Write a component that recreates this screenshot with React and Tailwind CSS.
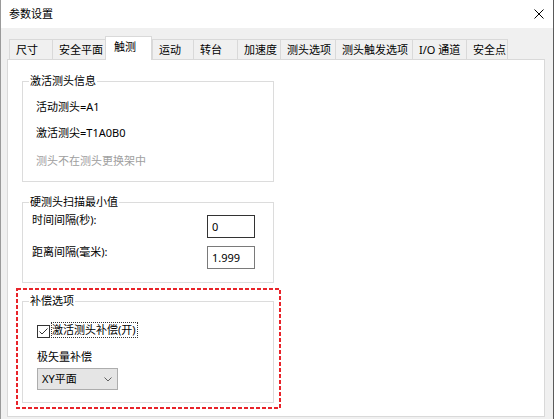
import React from 'react'

// Windows-style "参数设置" property sheet, 触测 tab selected.

const TABS = [
  { label: '尺寸', w: 'w-[43px]' },
  { label: '安全平面', w: 'w-[53px]' },
  { label: '触测', w: 'w-[47px]', active: true },
  { label: '运动', w: 'w-[41px]' },
  { label: '转台', w: 'w-[44px]' },
  { label: '加速度', w: 'w-[43px]' },
  { label: '测头选项', w: 'w-[55px]' },
  { label: '测头触发选项', w: 'w-[77px]' },
  { label: 'I/O 通道', w: 'w-[54px]' },
  { label: '安全点', w: 'w-[42px]', last: true },
]

function Tab({ tab }) {
  if (tab.active) {
    return (
      <div
        className={`${tab.w} h-[24px] -mb-px relative z-10 bg-white border border-b-0 border-[#d9d9d9] pl-[8px] pt-[2px] leading-[16px] text-black`}
      >
        {tab.label}
      </div>
    )
  }
  return (
    <div
      className={`${tab.w} h-[20px] bg-[#f0f0f0] border-t border-l ${
        tab.last ? 'border-r' : ''
      } border-[#d9d9d9] pl-[6px] pt-[2px] leading-[16px] text-black whitespace-nowrap`}
    >
      {tab.label}
    </div>
  )
}

function GroupBox({ title, className, children }) {
  return (
    <fieldset className={`border border-[#dcdcdc] ${className}`}>
      <legend className="ml-[6px] px-px leading-[14px] text-black">{title}</legend>
      {children}
    </fieldset>
  )
}

function CloseIcon() {
  return (
    <svg width="10" height="10" viewBox="0 0 10 10" className="block">
      <path d="M0.5 0.5 L9.5 9.5 M9.5 0.5 L0.5 9.5" stroke="#000" strokeWidth="1" fill="none" />
    </svg>
  )
}

function CheckBox() {
  return (
    <div className="w-[13px] h-[13px] border border-[#333] bg-white flex items-center justify-center mt-[3px]">
      <svg width="11" height="11" viewBox="0 0 11 11" className="block">
        <path d="M1.5 5.5 L4 8 L9.5 2.5" stroke="#333" strokeWidth="1" fill="none" />
      </svg>
    </div>
  )
}

export default function App() {
  return (
    <div className="w-[554px] h-[419px] flex flex-col border-l border-[#9a9a9a] border-r border-r-[#5a5a5a] bg-[#f0f0f0] text-[11px] font-['Noto_Sans','Noto_Sans_CJK_SC',sans-serif] overflow-hidden">
      {/* title bar */}
      <div className="h-[28px] bg-white flex items-center justify-between pl-[8px] pr-[9px] shrink-0">
        <span className="leading-[16px] text-black">参数设置</span>
        <CloseIcon />
      </div>

      {/* body */}
      <div className="flex-1 pl-[6px] pt-[8px]">
        <div className="flex items-end h-[23px] ml-[2px]">
          {TABS.map((t) => (
            <Tab key={t.label} tab={t} />
          ))}
        </div>

        <div className="w-[538px] h-[358px] bg-white border border-[#d9d9d9] pl-[8px] pt-[14px]">
          <GroupBox title="激活测头信息" className="ml-[6px] w-[252px] h-[108px]">
            <div className="pl-[13px] pt-[11px] flex flex-col leading-[16px]">
              <span className="text-black">活动测头=A1</span>
              <span className="text-black mt-[10px]">激活测尖=T1A0B0</span>
              <span className="text-[#a0a0a0] mt-[12px]">测头不在测头更换架中</span>
            </div>
          </GroupBox>

          <GroupBox title="硬测头扫描最小值" className="ml-[6px] mt-[13px] w-[252px] h-[88px]">
            <div className="pl-[9px] pr-[18px] pt-[6px] flex flex-col gap-[8px]">
              <div className="flex justify-between items-start h-[23px]">
                <span className="leading-[16px] -mt-[3px] text-black">时间间隔(秒):</span>
                <div className="w-[48px] h-[23px] border border-[#333] bg-white pl-[4px] leading-[21px] text-black">
                  0
                </div>
              </div>
              <div className="flex justify-between items-start h-[23px]">
                <span className="leading-[16px] -mt-[2px] text-black">距离间隔(毫米):</span>
                <div className="w-[48px] h-[23px] border border-[#7a7a7a] bg-white pl-[4px] leading-[21px] text-black">
                  1.999
                </div>
              </div>
            </div>
          </GroupBox>

          {/* highlighted region: red dashed annotation frame drawn over the box edge */}
          <div className="relative mt-[5px] w-[265px] h-[121px] p-[6px] pb-0">
            <svg
              className="absolute inset-0 pointer-events-none"
              width="265"
              height="121"
              viewBox="0 0 265 121"
            >
              <rect
                x="1"
                y="1"
                width="263"
                height="119"
                fill="none"
                stroke="#e8232a"
                strokeWidth="2"
                strokeDasharray="4 2"
              />
            </svg>
            <GroupBox title="补偿选项" className="w-[252px] h-[109px]">
              <div className="pl-[14px] pt-[14px] flex flex-col">
                <div className="flex items-start h-[16px]">
                  <CheckBox />
                  <span className="ml-px border border-dotted border-[#333] leading-[14px] text-black pr-px">
                    激活测头补偿(开)
                  </span>
                </div>
                <span className="mt-[11px] leading-[16px] text-black">极矢量补偿</span>
                <div className="mt-[3px] w-[81px] h-[22px] bg-[#e5e5e5] border border-[#adadad] flex items-center justify-between pl-[4px] pr-[5px]">
                  <span className="leading-[16px] text-black">XY平面</span>
                  <svg width="8" height="5" viewBox="0 0 8 5" className="block">
                    <path d="M0.5 0.5 L4 4 L7.5 0.5" stroke="#606060" strokeWidth="1" fill="none" />
                  </svg>
                </div>
              </div>
            </GroupBox>
          </div>
        </div>
      </div>
    </div>
  )
}
